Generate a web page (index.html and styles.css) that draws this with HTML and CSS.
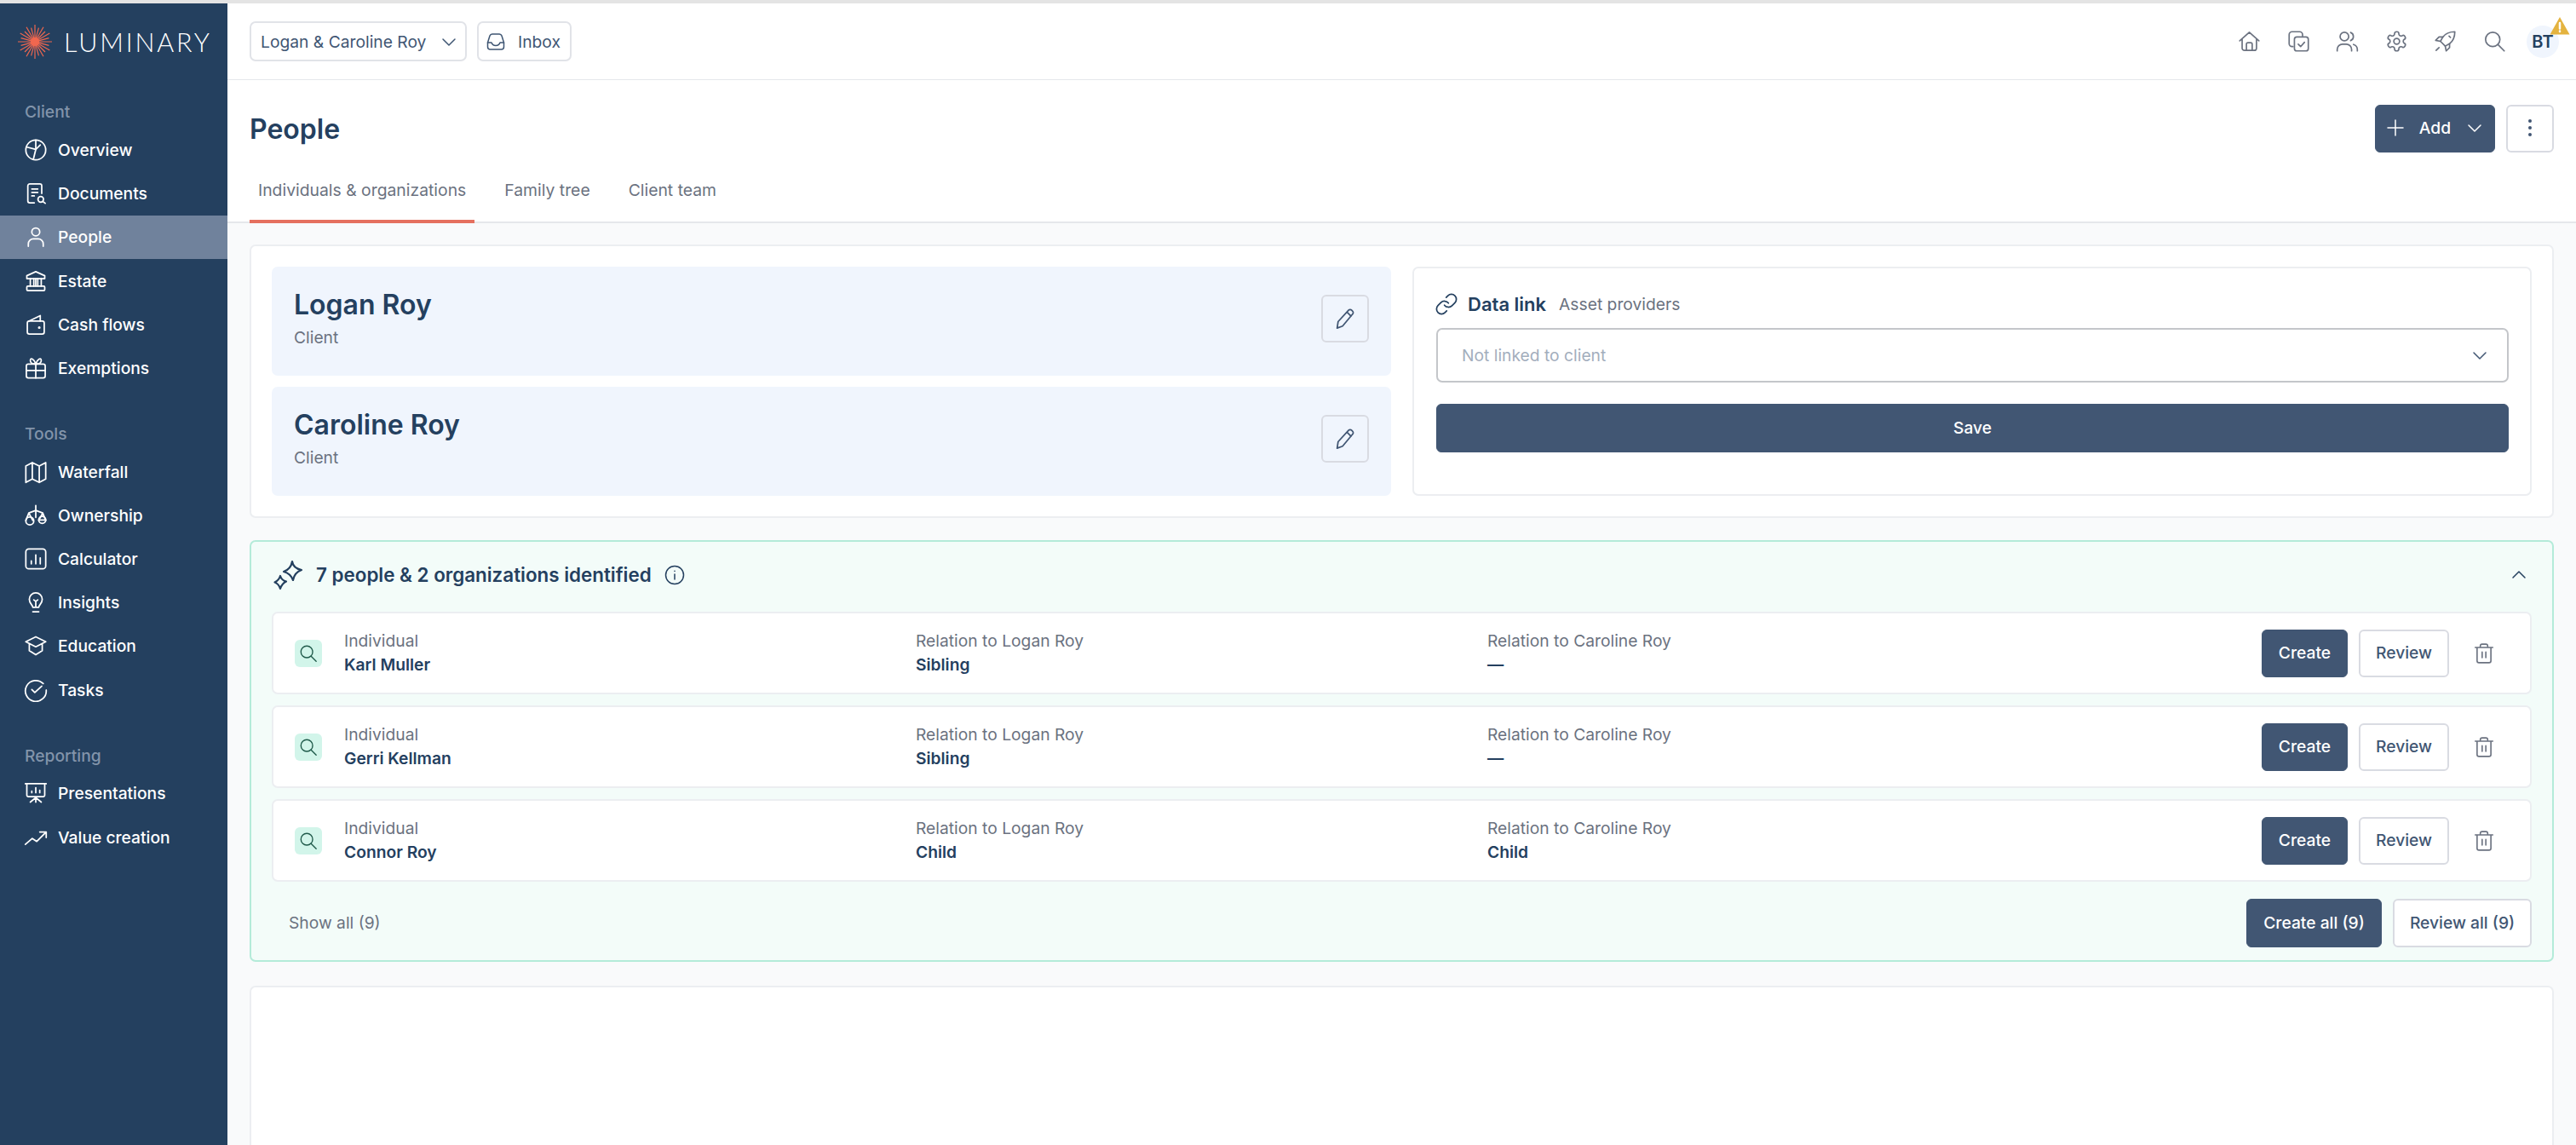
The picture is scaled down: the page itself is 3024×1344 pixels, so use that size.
FILE: index.html
```html
<!DOCTYPE html>
<html lang="en">

<head>
    <meta charset="UTF-8">
    <meta name="viewport" content="width=device-width, initial-scale=1.0">
    <title>People - Luminary</title>
    <link rel="stylesheet" href="styles.css">
</head>

<body>
    <svg class="icon-defs" xmlns="http://www.w3.org/2000/svg">
        <symbol id="i-overview" viewBox="0 0 24 24"><circle cx="12" cy="12" r="10"/><path d="M12 2v9.500L2.600 9M12 11.500 9.500 21.600"/><path d="M12 11.500 16.500 7"/></symbol>
        <symbol id="i-documents" viewBox="0 0 24 24"><path d="M10.500 21.500H6a2 2 0 0 1-2-2V4.500a2 2 0 0 1 2-2h10a2 2 0 0 1 2 2V12"/><path d="M8 7.500h6M8 11h6M8 14.500h2.500"/><circle cx="17" cy="18" r="2.800"/><path d="m19 20 2.500 2"/></symbol>
        <symbol id="i-person" viewBox="0 0 24 24"><circle cx="12" cy="7" r="4"/><path d="M4.500 21.500V19a5 5 0 0 1 5-5h5a5 5 0 0 1 5 5v2.500"/></symbol>
        <symbol id="i-estate" viewBox="0 0 24 24"><path d="M12 2.500 21 6.500V9.500H3V6.500Z"/><path d="M6.500 9.500V17M12 9.500V17M17.500 9.500V17M10 9.500V17M14 9.500V17"/><rect x="3" y="17" width="18" height="4.500" rx="1"/></symbol>
        <symbol id="i-wallet" viewBox="0 0 24 24"><path d="M5 8.500 16.500 3V8.500"/><rect x="3.500" y="8.500" width="17" height="13" rx="2"/><circle cx="15.500" cy="15" r=".6"/></symbol>
        <symbol id="i-gift" viewBox="0 0 24 24"><rect x="2.500" y="8" width="19" height="14" rx="2"/><path d="M2.500 14.500h19M12 8v14"/><path d="M12 8C10.500 3 6.500 1 6.500 4.500 6.500 7 9 8 12 8ZM12 8c1.500-5 5.500-7 5.500-3.500C17.500 7 15 8 12 8Z"/></symbol>
        <symbol id="i-map" viewBox="0 0 24 24"><path d="m2 6 6.500-3.500 7 3.500L22 2.500V19l-6.500 3.500-7-3.500L2 22.500ZM8.500 2.500V19M15.500 6v16.500"/></symbol>
        <symbol id="i-scale" viewBox="0 0 24 24"><path d="M12 2v12M5 9.500 12 7l7 2.500M5 9.500 2 17M5 9.500 9 17M19 9.500 15 17M19 9.500 22 17"/><circle cx="6" cy="17.500" r="4"/><circle cx="18.500" cy="16.500" r="3.500"/><path d="M15 16.500h7"/></symbol>
        <symbol id="i-chart" viewBox="0 0 24 24"><rect x="2" y="2" width="20" height="20" rx="3"/><path d="M7.500 17v-3M12 17V8M16.500 17v-6"/></symbol>
        <symbol id="i-bulb" viewBox="0 0 24 24"><path d="M9 17c0-2.500-3.500-3.500-3.500-8a6.500 6.500 0 0 1 13 0c0 4.500-3.500 5.500-3.500 8ZM9 21.500h6M12 17v-6M10 9.500l2 1.500 2-1.500"/></symbol>
        <symbol id="i-education" viewBox="0 0 24 24"><path d="m12 3 10 5-10 5L2 8ZM5.500 10v7l6.500 4 6.500-4v-7"/></symbol>
        <symbol id="i-tasks" viewBox="0 0 24 24"><path d="M19.500 5.500A10.500 10.500 0 1 0 22.500 12"/><path d="m8 11.500 3 3 7-6.500"/></symbol>
        <symbol id="i-present" viewBox="0 0 24 24"><path d="M1.500 2.500h21M3 2.500V14a1.500 1.500 0 0 0 1.500 1.500h15A1.500 1.500 0 0 0 21 14V2.500M8 11.500V10M12 11.500V6.500M16 11.500V9M12 15.500V21M6.500 21 12 16.500 17.500 21"/></symbol>
        <symbol id="i-trend" viewBox="0 0 24 24"><path d="M1.500 19 8.500 13l4.500 3 9-9M16 6.500h6.500V12"/></symbol>
        <symbol id="i-chevron" viewBox="0 0 24 24"><path d="m5 9 7 7 7-7"/></symbol>
        <symbol id="i-inbox" viewBox="0 0 24 24"><path d="M2.500 13 5 5a3 3 0 0 1 3-2h8a3 3 0 0 1 3 2l2.500 8v5a3 3 0 0 1-3 3h-13a3 3 0 0 1-3-3Z"/><path d="M2.500 13H7c1 3 2.500 3.500 5 3.500s4-.5 5-3.500h4.500"/></symbol>
        <symbol id="i-home" viewBox="0 0 24 24"><path d="M2 11.500 12 2.500l10 9M4.500 9.500V19a2.500 2.500 0 0 0 2.500 2.500h10a2.500 2.500 0 0 0 2.500-2.500V9.500M9 21.500V15a1.500 1.500 0 0 1 1.500-1.500h3A1.500 1.500 0 0 1 15 15v6.500"/></symbol>
        <symbol id="i-copycheck" viewBox="0 0 24 24"><path d="M6 17.500H5a3 3 0 0 1-3-3V5a3 3 0 0 1 3-3h8a3 3 0 0 1 3 3v1.500"/><rect x="7.500" y="7.500" width="14.500" height="14.500" rx="2.500"/><path d="m11.500 15 2.500 2.500 4-4.500"/></symbol>
        <symbol id="i-users" viewBox="0 0 24 24"><circle cx="9" cy="7" r="4.500"/><path d="M1.500 22v-1.500a5.500 5.500 0 0 1 5.500-5.500h4a5.500 5.500 0 0 1 5.500 5.500V22M15.500 2.800a4.500 4.500 0 0 1 0 8.400M18.500 15.300a5.500 5.500 0 0 1 4 5.200V22"/></symbol>
        <symbol id="i-gear" viewBox="0 0 24 24"><path d="M12.220 2h-.44a2 2 0 0 0-2 2v.18a2 2 0 0 1-1 1.730l-.43.250a2 2 0 0 1-2 0l-.15-.08a2 2 0 0 0-2.730.730l-.22.380a2 2 0 0 0 .730 2.730l.15.100a2 2 0 0 1 1 1.720v.510a2 2 0 0 1-1 1.740l-.15.090a2 2 0 0 0-.730 2.730l.22.380a2 2 0 0 0 2.730.730l.15-.08a2 2 0 0 1 2 0l.43.250a2 2 0 0 1 1 1.730V20a2 2 0 0 0 2 2h.44a2 2 0 0 0 2-2v-.18a2 2 0 0 1 1-1.730l.43-.25a2 2 0 0 1 2 0l.15.08a2 2 0 0 0 2.730-.730l.22-.39a2 2 0 0 0-.730-2.730l-.15-.08a2 2 0 0 1-1-1.740v-.5a2 2 0 0 1 1-1.740l.15-.09a2 2 0 0 0 .730-2.730l-.22-.38a2 2 0 0 0-2.730-.730l-.15.08a2 2 0 0 1-2 0l-.43-.25a2 2 0 0 1-1-1.730V4a2 2 0 0 0-2-2z"/><circle cx="12" cy="12" r="3"/></symbol>
        <symbol id="i-rocket" viewBox="0 0 24 24"><path d="M22 2c-5.500 0-9.500 1.500-12.500 5.500L7 12l5 5 4.500-2.500C20.500 11.500 22 7.500 22 2Z"/><path d="M9.500 7.500H5.500L2 11l5 1M16.500 14.500v4L13 22l-1-5M2.500 21.500l3-3M16 6.500l1.500 1.500"/></symbol>
        <symbol id="i-search" viewBox="0 0 24 24"><circle cx="10" cy="10" r="7.500"/><path d="m15.500 15.500 6.500 6.500"/></symbol>
        <symbol id="i-pencil" viewBox="0 0 24 24"><path d="M4 21.500 5 15 15.500 3.500a2.200 2.200 0 0 1 3.200 0l.8.800a2.200 2.200 0 0 1 0 3.200L9.500 19.500ZM14 5.500 18 9.500"/></symbol>
        <symbol id="i-link" viewBox="0 0 24 24"><path d="M10 13a5 5 0 0 0 7.540.54l3-3a5 5 0 0 0-7.070-7.070l-1.720 1.710"/><path d="M14 11a5 5 0 0 0-7.540-.54l-3 3a5 5 0 0 0 7.070 7.070l1.710-1.710"/></symbol>
        <symbol id="i-sparkle" viewBox="0 0 36 36"><path d="M22 2Q23 10 33 12 24.500 15 23 24 20 16 12 14 20.500 11 22 2Z"/><path d="M8 19Q9.500 24 15 25.500 10 28 8 34 6 28 1.500 26.500 6.500 24 8 19Z"/></symbol>
        <symbol id="i-info" viewBox="0 0 24 24"><circle cx="12" cy="12" r="10.500"/><path d="M12 11v6M12 7.300v.2"/></symbol>
        <symbol id="i-trash" viewBox="0 0 24 24"><path d="M2.500 5.500h19M8 5.500V4a2 2 0 0 1 2-2h4a2 2 0 0 1 2 2v1.500M4.500 5.500V20a2 2 0 0 0 2 2h11a2 2 0 0 0 2-2V5.500M10 10.500v6M14 10.500v6"/></symbol>
    </svg>

    <div class="top-line"></div>
    <div class="shell">
        <aside class="sidebar">
            <div class="logo">
                <svg class="sun" viewBox="-21 -21 42 42">
                    <g>
                        <path d="M0-20V20" />
                        <path d="M0-17V17" transform="rotate(15)" />
                        <path d="M0-20V20" transform="rotate(30)" />
                        <path d="M0-17V17" transform="rotate(45)" />
                        <path d="M0-20V20" transform="rotate(60)" />
                        <path d="M0-17V17" transform="rotate(75)" />
                        <path d="M0-20V20" transform="rotate(90)" />
                        <path d="M0-17V17" transform="rotate(105)" />
                        <path d="M0-20V20" transform="rotate(120)" />
                        <path d="M0-17V17" transform="rotate(135)" />
                        <path d="M0-20V20" transform="rotate(150)" />
                        <path d="M0-17V17" transform="rotate(165)" />
                    </g>
                    <circle r="4.500" />
                </svg>
                <span class="logo-text">LUMINARY</span>
            </div>

            <div class="nav-label nav-label-first">Client</div>
            <a class="nav-item"><svg class="icon"><use href="#i-overview" /></svg>Overview</a>
            <a class="nav-item"><svg class="icon"><use href="#i-documents" /></svg>Documents</a>
            <a class="nav-item active"><svg class="icon"><use href="#i-person" /></svg>People</a>
            <a class="nav-item"><svg class="icon"><use href="#i-estate" /></svg>Estate</a>
            <a class="nav-item"><svg class="icon"><use href="#i-wallet" /></svg>Cash flows</a>
            <a class="nav-item"><svg class="icon"><use href="#i-gift" /></svg>Exemptions</a>

            <div class="nav-label">Tools</div>
            <a class="nav-item"><svg class="icon"><use href="#i-map" /></svg>Waterfall</a>
            <a class="nav-item"><svg class="icon"><use href="#i-scale" /></svg>Ownership</a>
            <a class="nav-item"><svg class="icon"><use href="#i-chart" /></svg>Calculator</a>
            <a class="nav-item"><svg class="icon"><use href="#i-bulb" /></svg>Insights</a>
            <a class="nav-item"><svg class="icon"><use href="#i-education" /></svg>Education</a>
            <a class="nav-item"><svg class="icon"><use href="#i-tasks" /></svg>Tasks</a>

            <div class="nav-label">Reporting</div>
            <a class="nav-item"><svg class="icon"><use href="#i-present" /></svg>Presentations</a>
            <a class="nav-item"><svg class="icon"><use href="#i-trend" /></svg>Value creation</a>
        </aside>

        <main class="main">
            <header class="topbar">
                <button class="select-btn">Logan &amp; Caroline Roy<svg class="icon"><use href="#i-chevron" /></svg></button>
                <button class="inbox-btn"><svg class="icon"><use href="#i-inbox" /></svg>Inbox</button>
                <div class="top-icons">
                    <svg class="icon"><use href="#i-home" /></svg>
                    <svg class="icon"><use href="#i-copycheck" /></svg>
                    <svg class="icon"><use href="#i-users" /></svg>
                    <svg class="icon"><use href="#i-gear" /></svg>
                    <svg class="icon"><use href="#i-rocket" /></svg>
                    <svg class="icon"><use href="#i-search" /></svg>
                </div>
                <div class="avatar">BT
                    <svg class="warn" viewBox="0 0 24 22">
                        <path class="warn-bg" d="M12 1 23.500 21.500H.5Z" />
                        <path class="warn-mark" d="M12 8v6.500M12 17.500v.5" />
                    </svg>
                </div>
            </header>

            <div class="page-head">
                <h1>People</h1>
                <div class="head-actions">
                    <button class="btn btn-dark btn-add"><svg class="icon" viewBox="0 0 24 24"><path d="M12 3v18M3 12h18" /></svg>Add<svg class="icon"><use href="#i-chevron" /></svg></button>
                    <button class="btn btn-light btn-more"><span class="dot"></span><span class="dot"></span><span class="dot"></span></button>
                </div>
            </div>

            <nav class="tabs">
                <a class="tab active">Individuals &amp; organizations</a>
                <a class="tab">Family tree</a>
                <a class="tab">Client team</a>
            </nav>

            <section class="content">
                <div class="card clients">
                    <div class="client-list">
                        <div class="client">
                            <div>
                                <div class="client-name">Logan Roy</div>
                                <div class="client-role">Client</div>
                            </div>
                            <button class="edit-btn"><svg class="icon"><use href="#i-pencil" /></svg></button>
                        </div>
                        <div class="client">
                            <div>
                                <div class="client-name">Caroline Roy</div>
                                <div class="client-role">Client</div>
                            </div>
                            <button class="edit-btn"><svg class="icon"><use href="#i-pencil" /></svg></button>
                        </div>
                    </div>
                    <div class="data-link">
                        <div class="data-head">
                            <svg class="icon"><use href="#i-link" /></svg>
                            <strong>Data link</strong>
                            <span>Asset providers</span>
                        </div>
                        <div class="data-select">Not linked to client<svg class="icon"><use href="#i-chevron" /></svg></div>
                        <button class="btn btn-dark btn-save">Save</button>
                    </div>
                </div>

                <div class="panel">
                    <div class="panel-head">
                        <svg class="icon sparkle"><use href="#i-sparkle" /></svg>
                        <span class="panel-title">7 people &amp; 2 organizations identified</span>
                        <svg class="icon info"><use href="#i-info" /></svg>
                        <svg class="icon collapse"><use href="#i-chevron" /></svg>
                    </div>

                    <div class="rows">
                        <div class="row">
                            <span class="row-icon"><svg class="icon"><use href="#i-search" /></svg></span>
                            <div class="cell"><div class="cell-label">Individual</div><div class="cell-value">Karl Muller</div></div>
                            <div class="cell"><div class="cell-label">Relation to Logan Roy</div><div class="cell-value">Sibling</div></div>
                            <div class="cell cell-last"><div class="cell-label">Relation to Caroline Roy</div><div class="cell-value">—</div></div>
                            <button class="btn btn-dark btn-create">Create</button>
                            <button class="btn btn-light btn-review">Review</button>
                            <svg class="icon trash"><use href="#i-trash" /></svg>
                        </div>
                        <div class="row">
                            <span class="row-icon"><svg class="icon"><use href="#i-search" /></svg></span>
                            <div class="cell"><div class="cell-label">Individual</div><div class="cell-value">Gerri Kellman</div></div>
                            <div class="cell"><div class="cell-label">Relation to Logan Roy</div><div class="cell-value">Sibling</div></div>
                            <div class="cell cell-last"><div class="cell-label">Relation to Caroline Roy</div><div class="cell-value">—</div></div>
                            <button class="btn btn-dark btn-create">Create</button>
                            <button class="btn btn-light btn-review">Review</button>
                            <svg class="icon trash"><use href="#i-trash" /></svg>
                        </div>
                        <div class="row">
                            <span class="row-icon"><svg class="icon"><use href="#i-search" /></svg></span>
                            <div class="cell"><div class="cell-label">Individual</div><div class="cell-value">Connor Roy</div></div>
                            <div class="cell"><div class="cell-label">Relation to Logan Roy</div><div class="cell-value">Child</div></div>
                            <div class="cell cell-last"><div class="cell-label">Relation to Caroline Roy</div><div class="cell-value">Child</div></div>
                            <button class="btn btn-dark btn-create">Create</button>
                            <button class="btn btn-light btn-review">Review</button>
                            <svg class="icon trash"><use href="#i-trash" /></svg>
                        </div>
                    </div>

                    <div class="panel-foot">
                        <span class="show-all">Show all (9)</span>
                        <button class="btn btn-dark btn-all btn-all-create">Create all (9)</button>
                        <button class="btn btn-light btn-all btn-all-review">Review all (9)</button>
                    </div>
                </div>

                <div class="card empty"></div>
            </section>
        </main>
    </div>
</body>

</html>
```
FILE: styles.css
```css
* {
    box-sizing: border-box;
}

html,
body {
    height: 100%;
}

body {
    margin: 0;
    font-family: Inter, "Liberation Sans", sans-serif;
    font-size: 19.25px;
    color: #24405f;
    background-color: #fff;
    overflow: hidden;
}

button {
    font-family: inherit;
    cursor: pointer;
}

.icon-defs {
    display: none;
}

.icon {
    width: 24px;
    height: 24px;
    flex: none;
    fill: none;
    stroke: currentColor;
    stroke-width: 1.5;
    stroke-linecap: round;
    stroke-linejoin: round;
}

.top-line {
    height: 4px;
    background-color: #e4e4e4;
}

.shell {
    display: flex;
    height: 1340px;
}

/* sidebar */
.sidebar {
    width: 267px;
    flex: none;
    background-color: #24405f;
    color: #fff;
}

.logo {
    display: flex;
    align-items: center;
    height: 90px;
    padding-left: 20px;
}

.sun {
    width: 42px;
    height: 42px;
    margin-right: 13px;
    stroke: #f0674f;
    stroke-width: 1.2;
    fill: #f0674f;
}

.logo-text {
    font-family: Lato, "Liberation Sans", sans-serif;
    font-weight: 300;
    font-size: 30.500px;
    letter-spacing: 2.800px;
}

.nav-label {
    height: 24px;
    line-height: 24px;
    margin: 39.500px 0 7px 29px;
    font-weight: 500;
    color: #8294aa;
}

.nav-label-first {
    margin-top: 25px;
    margin-bottom: 7.500px;
}

.nav-item {
    display: flex;
    align-items: center;
    gap: 12px;
    height: 51.200px;
    padding-left: 28px;
    font-weight: 500;
}

.nav-item .icon {
    width: 28px;
    height: 28px;
}

.nav-item.active {
    background-color: #70829c;
}

/* top bar */
.main {
    flex: 1;
    min-width: 0;
    display: flex;
    flex-direction: column;
}

.topbar {
    display: flex;
    align-items: center;
    height: 90px;
    padding: 0 26px;
    border-bottom: 1px solid #e5e7eb;
}

.select-btn,
.inbox-btn {
    display: flex;
    align-items: center;
    height: 47px;
    background-color: #fff;
    border: 2px solid #e1e3e8;
    border-radius: 7px;
    font-size: 19.25px;
    color: #3f5673;
    white-space: nowrap;
}

.select-btn {
    width: 255px;
    justify-content: space-between;
    padding: 0 7px 0 11px;
}

.inbox-btn {
    width: 111px;
    margin-left: 12px;
    gap: 14px;
    padding: 0 8px;
}

.top-icons {
    display: flex;
    gap: 30.600px;
    margin-left: auto;
    color: #6b7280;
}

.top-icons .icon {
    width: 27px;
    height: 27px;
}

.avatar {
    position: relative;
    display: flex;
    align-items: center;
    justify-content: center;
    width: 38px;
    height: 38px;
    margin: 0 -6px 0 24px;
    border-radius: 50%;
    background-color: #f0f5fd;
    font-weight: 600;
    font-size: 20px;
}

.warn {
    position: absolute;
    top: -11px;
    left: 27px;
    width: 24px;
    height: 22px;
}

.warn-bg {
    fill: #e4b33f;
}

.warn-mark {
    fill: none;
    stroke: #fff;
    stroke-width: 2.5;
    stroke-linecap: round;
}

/* page head */
.page-head {
    display: flex;
    align-items: center;
    justify-content: space-between;
    margin-top: 29px;
    padding: 0 26px;
}

h1 {
    margin: 0;
    font-size: 32px;
    font-weight: 600;
}

.head-actions {
    display: flex;
    gap: 13px;
}

.btn {
    display: flex;
    align-items: center;
    justify-content: center;
    height: 56px;
    padding: 0 0 2px;
    border-radius: 6px;
    font-size: 19.25px;
    font-weight: 500;
    white-space: nowrap;
}

.btn-dark {
    background-color: #415673;
    border: 1px solid #415673;
    color: #fff;
}

.btn-light {
    background-color: #fff;
    border: 2px solid #d9dbe2;
    color: #415673;
}

.btn-add {
    width: 141px;
    gap: 16px;
}

.btn-more {
    flex-direction: column;
    gap: 4px;
    width: 56px;
}

.dot {
    width: 4px;
    height: 4px;
    border-radius: 50%;
    background-color: #415673;
}

/* tabs */
.tabs {
    display: flex;
    align-items: flex-end;
    gap: 25px;
    height: 83px;
    padding-left: 26px;
    border-bottom: 2px solid #e5e7eb;
    flex: none;
}

.tab {
    margin-bottom: -2px;
    padding: 10px 10px 23px;
    font-size: 19.350px;
    line-height: 24px;
    color: #6b7280;
    border-bottom: 4px solid transparent;
}

.tab.active {
    border-bottom-color: #e5705f;
}

/* content */
.content {
    flex: 1;
    min-height: 0;
    padding: 25px 26px 0;
    background-color: #f9fafb;
    overflow: hidden;
}

.card {
    background-color: #fff;
    border: 2px solid #eceef1;
    border-radius: 7px;
}

.clients {
    display: grid;
    grid-template-columns: 1fr 1fr;
    gap: 25px;
    height: 321px;
    padding: 24px;
}

.client-list {
    display: flex;
    flex-direction: column;
    gap: 13px;
}

.client {
    display: flex;
    justify-content: space-between;
    height: 128px;
    padding: 26px 26px 0;
    background-color: #f0f5fd;
    border-radius: 7px;
}

.client-name {
    font-size: 32px;
    font-weight: 600;
    line-height: 38px;
}

.client-role {
    margin-top: 7px;
    line-height: 24px;
    color: #6b7280;
}

.edit-btn {
    display: flex;
    align-items: center;
    justify-content: center;
    width: 56px;
    height: 56px;
    margin-top: 7px;
    padding: 0;
    background: none;
    border: 2px solid #d9dbe2;
    border-radius: 6px;
    color: #415673;
}

.edit-btn .icon {
    width: 28px;
    height: 28px;
}

.data-link {
    padding: 26px 25px 0 26px;
    border: 2px solid #eceef1;
    border-radius: 7px;
}

.data-head {
    display: flex;
    align-items: center;
    height: 36px;
    margin-top: -2px;
}

.data-head .icon {
    width: 28px;
    height: 28px;
    margin-left: -2px;
    margin-right: 11px;
}

.data-head strong {
    font-size: 22px;
    font-weight: 600;
    margin-right: 15px;
}

.data-head span {
    color: #6b7280;
}

.data-select {
    display: flex;
    align-items: center;
    justify-content: space-between;
    height: 64px;
    margin-top: 10px;
    padding: 0 20px 0 28px;
    border: 2px solid #c4c6ca;
    border-radius: 7px;
    color: #a3aebd;
}

.data-select .icon {
    color: #415673;
}

.btn-save {
    width: 100%;
    height: 57px;
    margin-top: 25px;
}

/* identified panel */
.panel {
    margin-top: 26px;
    height: 495px;
    background-color: #f3fcf9;
    border: 2px solid #b4ebd9;
    border-radius: 7px;
}

.panel-head {
    display: flex;
    align-items: center;
    height: 77px;
    margin-bottom: 5px;
    padding: 0 27px 0 26px;
}

.sparkle {
    width: 36px;
    height: 36px;
    margin-right: 14px;
    stroke-width: 2.2;
}

.panel-title {
    font-size: 22.400px;
    font-weight: 600;
}

.info {
    margin-left: 15px;
}

.collapse {
    margin-left: auto;
    transform: rotate(180deg);
}

.rows {
    display: flex;
    flex-direction: column;
    gap: 13px;
    margin: 0 24px;
}

.row {
    display: flex;
    align-items: center;
    height: 97px;
    padding: 0 41px 0 25px;
    background-color: #fff;
    border: 2px solid #eceef1;
    border-radius: 7px;
}

.row-icon {
    display: flex;
    align-items: center;
    justify-content: center;
    width: 32px;
    height: 32px;
    margin-right: 26px;
    border-radius: 6px;
    background-color: #d2f5ea;
    color: #1f5a4a;
}

.row-icon .icon {
    width: 22px;
    height: 22px;
}

.cell {
    width: 671px;
    margin-top: -2px;
    line-height: 28px;
}

.cell-last {
    width: auto;
    flex: 1;
}

.cell-label {
    color: #6b7280;
}

.cell-value {
    font-weight: 600;
}

.btn-create {
    width: 101px;
}

.btn-review {
    width: 106px;
    margin: 0 28px 0 13px;
}

.trash {
    width: 26px;
    height: 26px;
    color: #6b7280;
}

.panel-foot {
    display: flex;
    align-items: center;
    gap: 13px;
    margin: 20px 24px 0;
}

.show-all {
    margin-right: auto;
    padding-left: 20px;
    padding-bottom: 2px;
    color: #6b7280;
}

.btn-all {
    height: 57px;
}

.btn-all-create {
    width: 159px;
}

.btn-all-review {
    width: 163px;
}

.empty {
    height: 300px;
    margin-top: 28px;
}
```
